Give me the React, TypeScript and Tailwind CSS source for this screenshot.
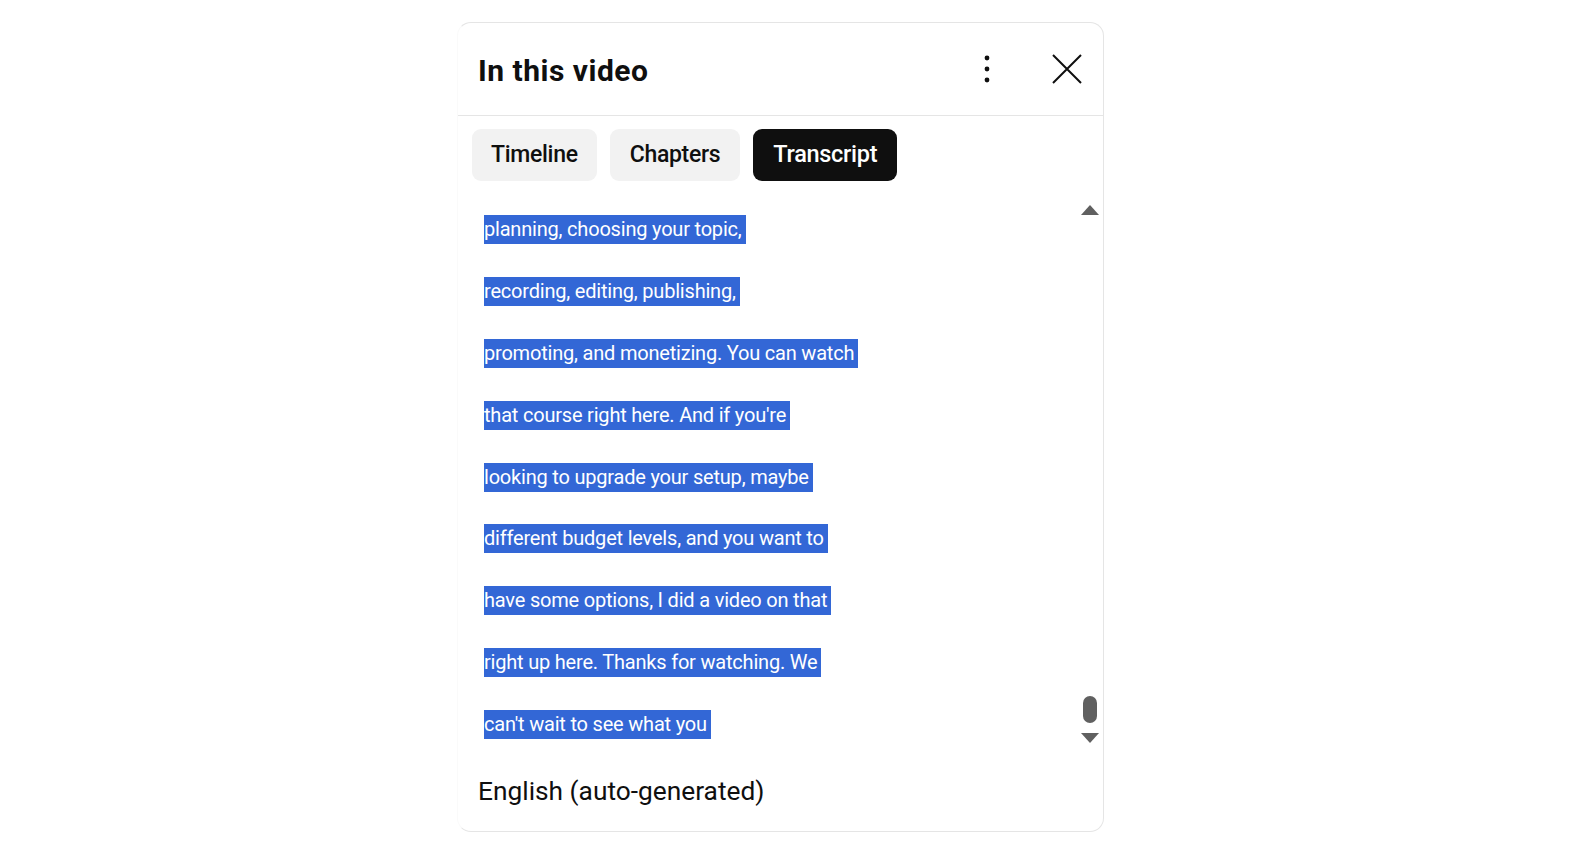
import React from "react";

const lines = [
  "planning, choosing your topic,",
  "recording, editing, publishing,",
  "promoting, and monetizing. You can watch",
  "that course right here. And if you're",
  "looking to upgrade your setup, maybe",
  "different budget levels, and you want to",
  "have some options, I did a video on that",
  "right up here. Thanks for watching. We",
  "can't wait to see what you",
];

export default function App() {
  return (
    <div className="w-[1574px] h-[860px] bg-white overflow-hidden" style={{ fontFamily: "Roboto, 'Liberation Sans', sans-serif" }}>
      <div className="ml-[457px] mt-[22px] w-[647px] h-[810px] border border-[#e5e5e5] border-l-[#fafafa] rounded-[14px] flex flex-col bg-white">
        <div className="h-[93px] shrink-0 border-b border-[#e5e5e5] flex items-center pl-[20px] pr-[20px]">
          <div className="text-[30px] font-bold text-[#0f0f0f] tracking-[0.5px] mt-[2px]">In this video</div>
          <div className="ml-auto flex items-center">
            <svg width="6" height="28" viewBox="0 0 6 28" className="mr-[61px]">
              <circle cx="3" cy="3" r="2.4" fill="#0f0f0f" />
              <circle cx="3" cy="14" r="2.4" fill="#0f0f0f" />
              <circle cx="3" cy="25" r="2.4" fill="#0f0f0f" />
            </svg>
            <svg width="32" height="32" viewBox="0 0 32 32">
              <path d="M2 2 L30 30 M30 2 L2 30" stroke="#0f0f0f" strokeWidth="2" />
            </svg>
          </div>
        </div>
        <div className="flex gap-[13px] pl-[14px] pt-[13px] shrink-0">
          <div className="h-[52px] px-[19px] rounded-[9px] bg-[#f2f2f2] flex items-center text-[23px] font-medium text-[#0f0f0f] tracking-[-0.3px]">Timeline</div>
          <div className="h-[52px] px-[20px] rounded-[9px] bg-[#f2f2f2] flex items-center text-[23px] font-medium text-[#0f0f0f] tracking-[-0.3px]">Chapters</div>
          <div className="h-[52px] px-[20px] rounded-[9px] bg-[#0f0f0f] flex items-center text-[23.5px] font-medium text-white tracking-[-0.3px]">Transcript</div>
        </div>
        <div className="flex relative mt-[18px] h-[556px] shrink-0">
          <div className="flex-1 pl-[26px] flex flex-col">
            {lines.map((l) => (
              <div key={l} className="h-[61.8px] flex items-center">
                <span className="bg-[#3367d6] text-white text-[20px] leading-[29px] h-[29px] pr-[4px] tracking-[-0.2px] whitespace-nowrap">{l}</span>
              </div>
            ))}
          </div>
          <div className="w-[24px] mr-[1px] flex flex-col items-center pt-[6px]">
            <svg width="18" height="10" viewBox="0 0 18 10"><path d="M9 0 L18 10 L0 10 Z" fill="#606060" /></svg>
            <div className="flex-1" />
            <div className="w-[14px] h-[27px] rounded-full bg-[#606060] mb-[10px]" />
            <svg width="18" height="10" viewBox="0 0 18 10" className="mb-[12px]"><path d="M0 0 L18 0 L9 10 Z" fill="#606060" /></svg>
          </div>
        </div>
        <div className="flex-1 flex items-center pl-[20px] pb-[2px]">
          <div className="text-[26.3px] text-[#0f0f0f]">English (auto-generated)</div>
        </div>
      </div>
    </div>
  );
}
